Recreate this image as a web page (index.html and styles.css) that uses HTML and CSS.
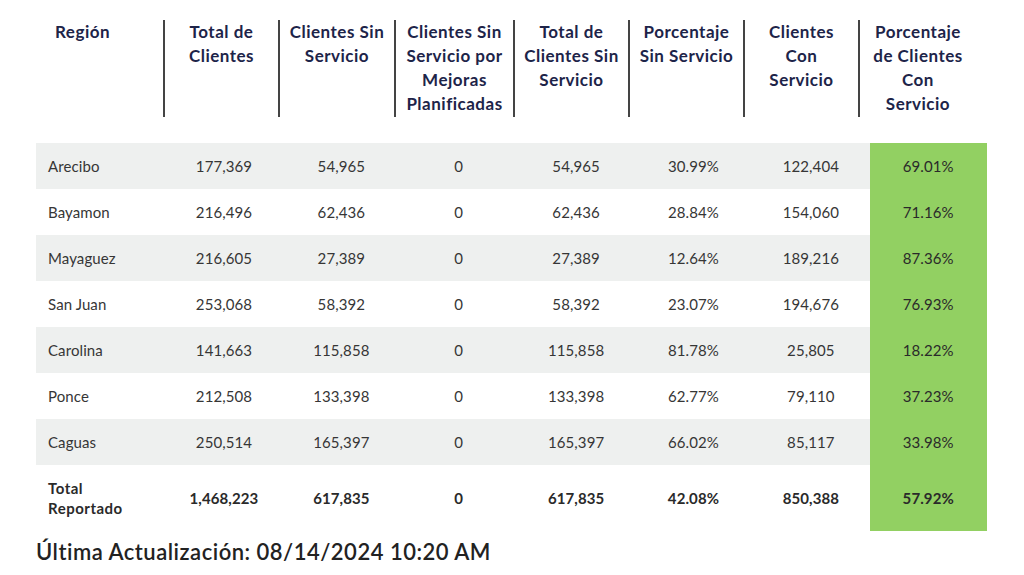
FILE: index.html
```html
<!DOCTYPE html>
<html lang="es">
<head>
<meta charset="utf-8">
<title>Clientes por Región</title>
<link rel="stylesheet" href="styles.css">
</head>
<body>
<div class="page">
  <div class="head">
    <div class="h h-first">Región</div>
    <div class="h">Total de<br>Clientes</div>
    <div class="h">Clientes Sin<br>Servicio</div>
    <div class="h">Clientes Sin<br>Servicio por<br>Mejoras<br>Planificadas</div>
    <div class="h">Total de<br>Clientes Sin<br>Servicio</div>
    <div class="h">Porcentaje<br>Sin Servicio</div>
    <div class="h">Clientes<br>Con<br>Servicio</div>
    <div class="h">Porcentaje<br>de Clientes<br>Con<br>Servicio</div>
  </div>
  <div class="body">
    <div class="row grey"><div class="c c-first">Arecibo</div><div class="c">177,369</div><div class="c">54,965</div><div class="c">0</div><div class="c">54,965</div><div class="c">30.99%</div><div class="c">122,404</div><div class="c green">69.01%</div></div>
    <div class="row"><div class="c c-first">Bayamon</div><div class="c">216,496</div><div class="c">62,436</div><div class="c">0</div><div class="c">62,436</div><div class="c">28.84%</div><div class="c">154,060</div><div class="c green">71.16%</div></div>
    <div class="row grey"><div class="c c-first">Mayaguez</div><div class="c">216,605</div><div class="c">27,389</div><div class="c">0</div><div class="c">27,389</div><div class="c">12.64%</div><div class="c">189,216</div><div class="c green">87.36%</div></div>
    <div class="row"><div class="c c-first">San Juan</div><div class="c">253,068</div><div class="c">58,392</div><div class="c">0</div><div class="c">58,392</div><div class="c">23.07%</div><div class="c">194,676</div><div class="c green">76.93%</div></div>
    <div class="row grey"><div class="c c-first">Carolina</div><div class="c">141,663</div><div class="c">115,858</div><div class="c">0</div><div class="c">115,858</div><div class="c">81.78%</div><div class="c">25,805</div><div class="c green">18.22%</div></div>
    <div class="row"><div class="c c-first">Ponce</div><div class="c">212,508</div><div class="c">133,398</div><div class="c">0</div><div class="c">133,398</div><div class="c">62.77%</div><div class="c">79,110</div><div class="c green">37.23%</div></div>
    <div class="row grey"><div class="c c-first">Caguas</div><div class="c">250,514</div><div class="c">165,397</div><div class="c">0</div><div class="c">165,397</div><div class="c">66.02%</div><div class="c">85,117</div><div class="c green">33.98%</div></div>
    <div class="row total"><div class="c c-first total-label">Total<br>Reportado</div><div class="c">1,468,223</div><div class="c">617,835</div><div class="c">0</div><div class="c">617,835</div><div class="c">42.08%</div><div class="c">850,388</div><div class="c green">57.92%</div></div>
  </div>
  <div class="updated">Última Actualización: 08/14/2024 10:20 AM</div>
</div>
</body>
</html>
```

FILE: styles.css
```css
* { box-sizing: border-box; }
html, body { margin: 0; padding: 0; background: #ffffff; }
body { font-family: Lato, "Open Sans", sans-serif; }

.page {
  width: 1024px;
  height: 575px;
  padding: 20px 0 0 36px;
  overflow: hidden;
}

.head {
  display: grid;
  grid-template-columns: 127px 115px 116px 119px 115px 115px 115px 118px;
  height: 97px;
}
.h {
  border-left: 2px solid #444444;
  color: #1d2449;
  font-weight: 700;
  font-size: 17px;
  line-height: 24px;
  letter-spacing: 0.5px;
  text-align: center;
}
.h-first {
  border-left: none;
  text-align: left;
  padding-left: 19px;
}

.body {
  margin-top: 26px;
  width: 951px;
}
.row {
  display: grid;
  grid-template-columns: 129.3px repeat(7, 117.39px);
  height: 46px;
}
.row.grey { background: #eef0ef; }
.c {
  display: flex;
  align-items: center;
  justify-content: center;
  color: #363636;
  font-size: 15px;
  letter-spacing: 0.1px;
}
.c-first {
  justify-content: flex-start;
  padding-left: 12px;
}
.green { background: #92d062; color: #2a2a2a; }

.row.total { height: 66px; }
.row.total .c { font-weight: 700; color: #2a2a2a; }
.total-label {
  font-size: 15px;
  line-height: 20px;
  letter-spacing: 0.5px;
  padding-left: 12px;
}

.updated {
  margin-top: 7px;
  font-size: 22px;
  font-weight: 600;
  color: #222222;
  letter-spacing: 0.5px;
  line-height: 28px;
}
```
